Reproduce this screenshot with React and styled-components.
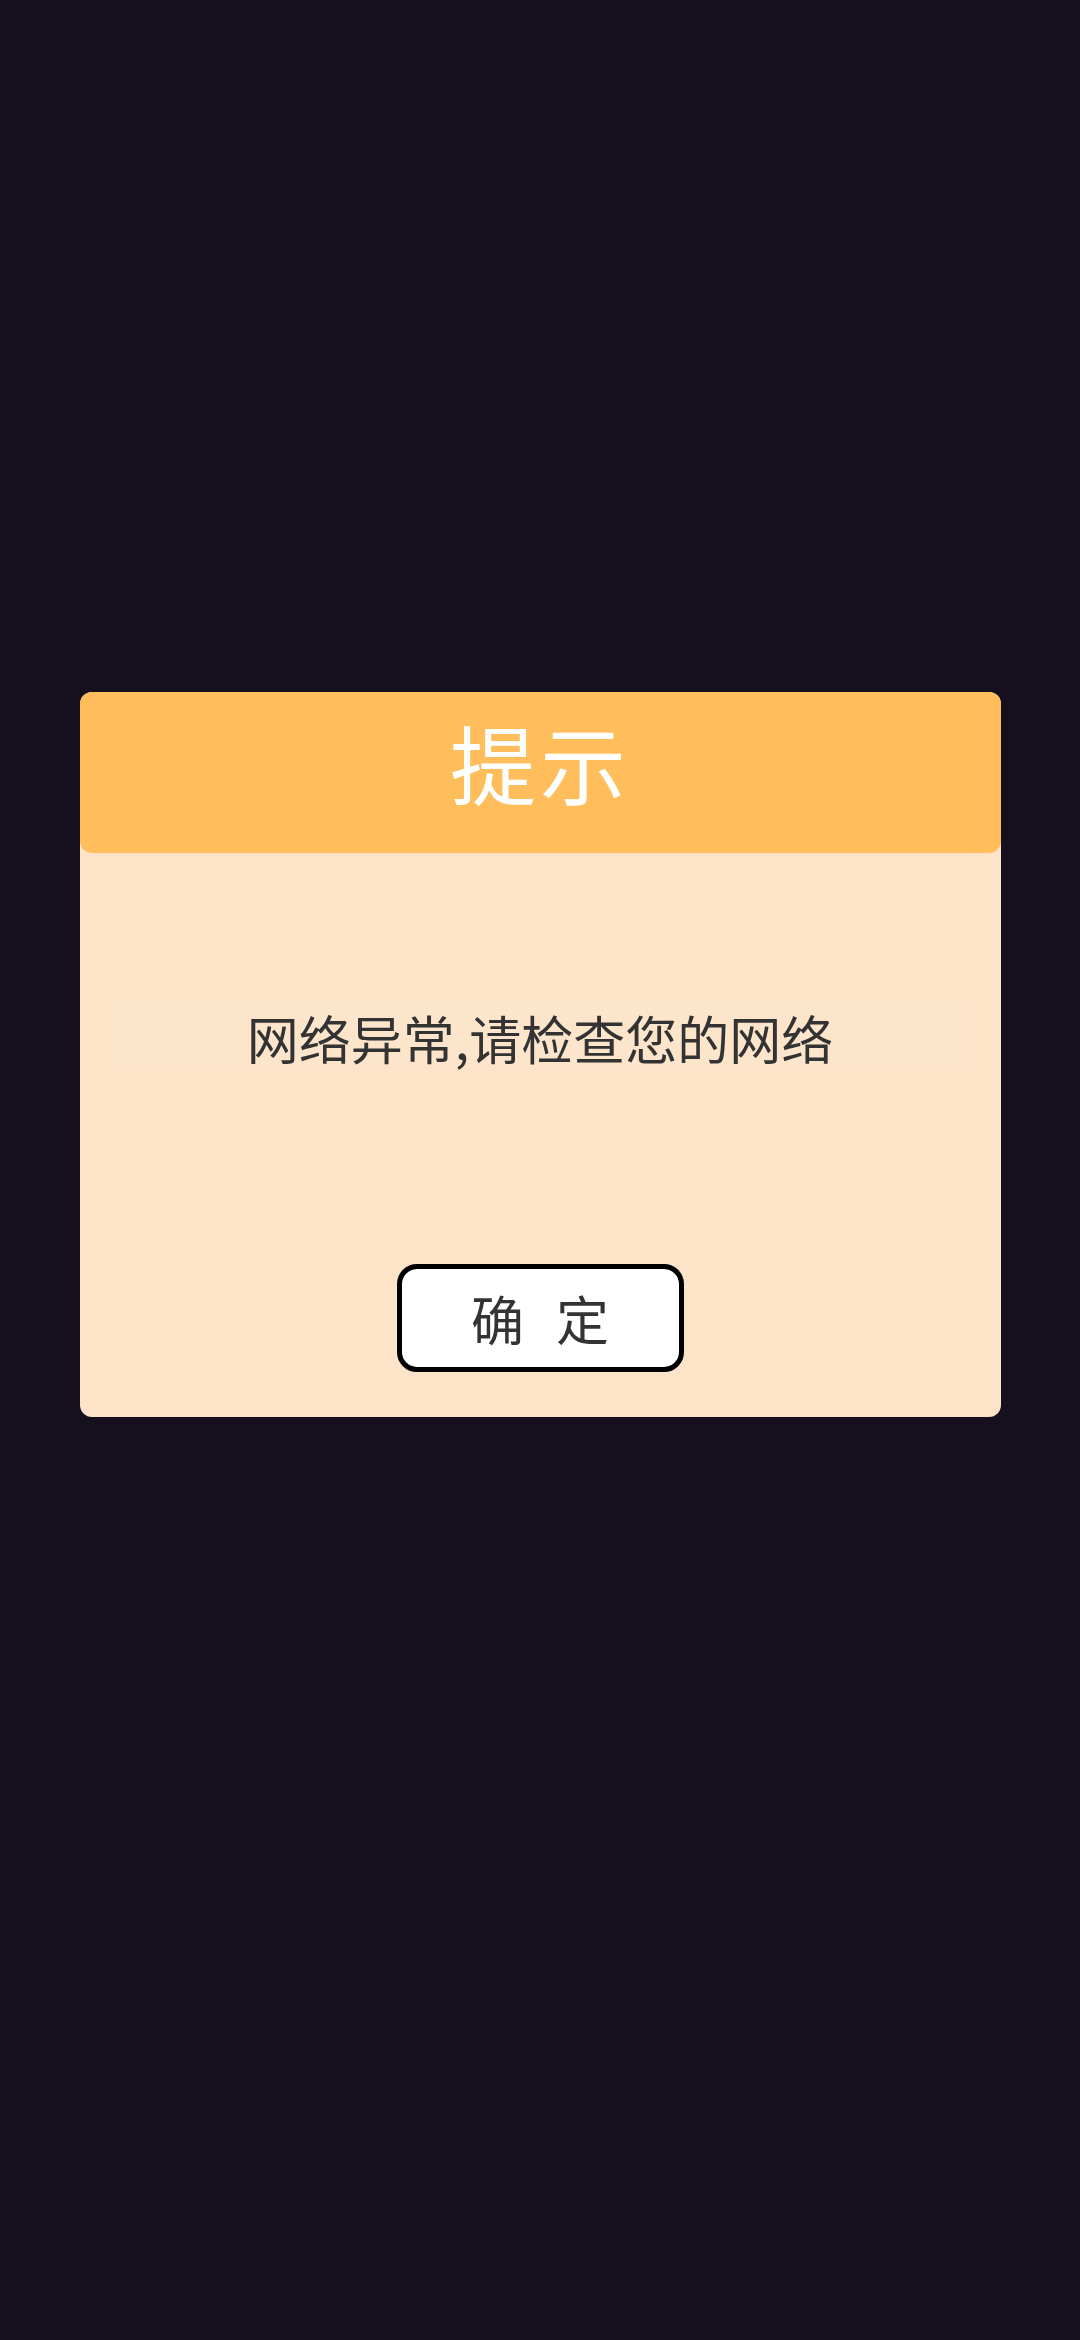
import React from "react";
import styled, { createGlobalStyle } from "styled-components";

const Global = createGlobalStyle`
  html, body { margin: 0; padding: 0; background: #16101e; }
  body { font-family: "Noto Sans CJK SC", "Noto Sans", sans-serif; }
  #root { min-height: 2340px; }
`;

const Screen = styled.div`
  width: 1080px;
  height: 2340px;
  background: #16101e;
  display: flex;
  flex-direction: column;
  align-items: center;
  padding-top: 692px;
  box-sizing: border-box;
`;

const Card = styled.div`
  width: 921px;
  height: 725px;
  background: #fde3c8;
  border-radius: 12px;
  display: flex;
  flex-direction: column;
  align-items: center;
  box-sizing: border-box;
`;

const Header = styled.div`
  width: 100%;
  height: 161px;
  background: #ffbe5b;
  border-radius: 12px;
  display: flex;
  align-items: center;
  justify-content: center;
  box-sizing: border-box;
  padding-bottom: 22px;
`;

const Title = styled.h1`
  margin: 0;
  font-size: 86px;
  font-weight: 400;
  color: #ffffff;
  line-height: 1;
  letter-spacing: 4px;
`;

const Message = styled.div`
  margin-top: 147px;
  width: 863px;
  height: 67px;
  background: rgba(255, 236, 214, 0.25);
  display: flex;
  align-items: center;
  justify-content: center;
  font-size: 52px;
  color: #333333;
  line-height: 1;
  padding-top: 8px;
  box-sizing: border-box;
  word-spacing: 4px;
`;

const Button = styled.button`
  margin-top: 197px;
  width: 287px;
  height: 108px;
  background: #ffffff;
  border: 5px solid #000000;
  border-radius: 20px;
  box-sizing: border-box;
  display: flex;
  align-items: center;
  justify-content: center;
  font-family: "Noto Sans CJK SC", "Noto Sans", sans-serif;
  font-size: 53px;
  color: #333333;
  line-height: 1;
  padding: 0;
  word-spacing: 20px;
  cursor: pointer;
`;

export default function App() {
  return (
    <>
      <Global />
      <Screen>
        <Card>
          <Header>
            <Title>提示</Title>
          </Header>
          <Message>网络异常,请检查您的网络</Message>
          <Button>确 定</Button>
        </Card>
      </Screen>
    </>
  );
}
